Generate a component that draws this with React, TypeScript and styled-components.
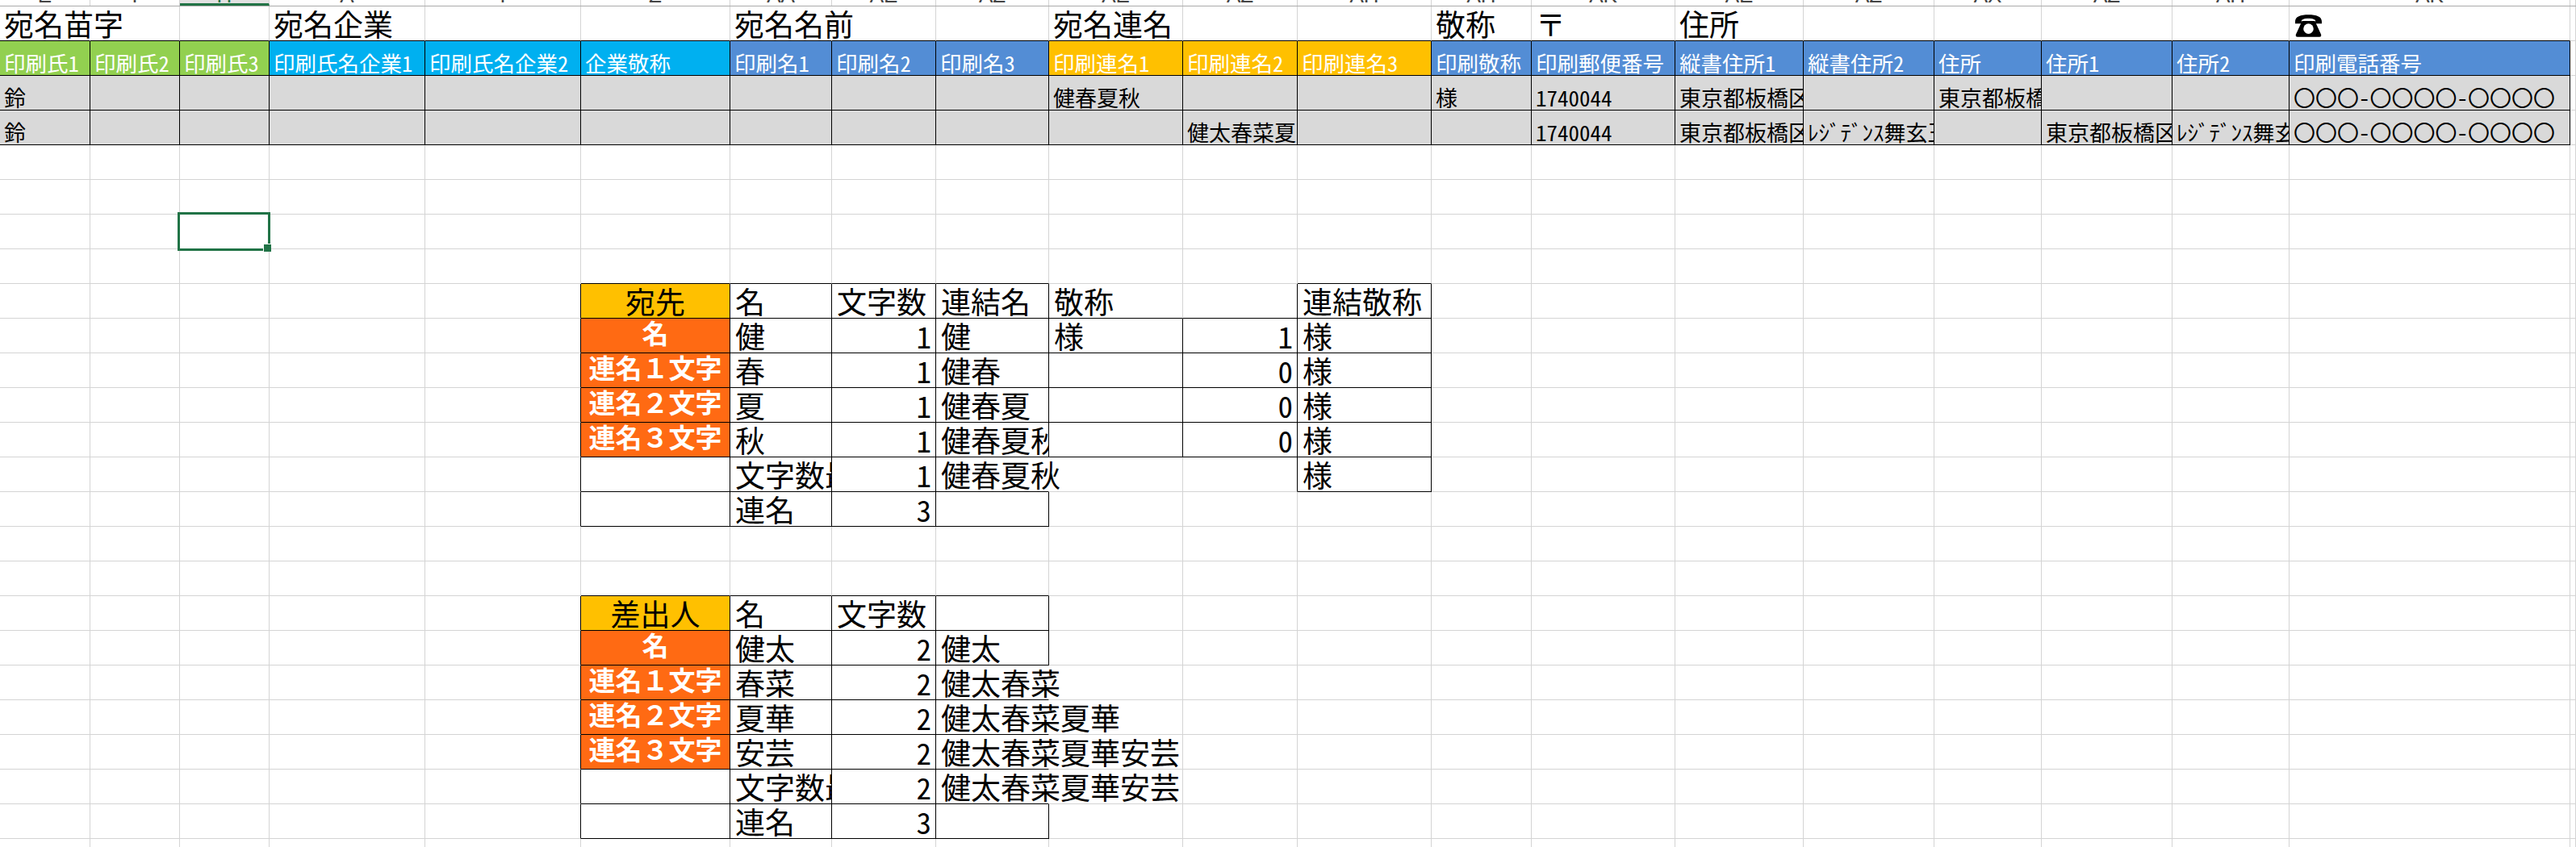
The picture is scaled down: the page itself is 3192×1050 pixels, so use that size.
import React from "react";
import styled, { createGlobalStyle, css } from "styled-components";

const COLS = [112, 111, 111, 193, 193, 185, 126, 129, 140, 166, 142, 166, 124, 178, 159, 162, 133, 162, 145, 348, 7];
const ROWS = 25;
const LETTERS = ["E", "T", "H", "A", "T", "Z", "AA", "AE", "AZ", "AE", "AZ", "AH", "AH", "AK", "AE", "AZ", "AX", "AZ", "AH", "AK", ""];
const template = COLS.map((w) => `${w}px`).join(" ");

const Global = createGlobalStyle`
  html, body { margin: 0; padding: 0; background: #fff; overflow: hidden; }
  body { font-family: "Noto Sans CJK JP", "Liberation Sans", sans-serif; font-feature-settings: "hwid"; }
`;

const Sheet = styled.div`
  width: 3192px;
  height: 1050px;
  overflow: hidden;
  background: #fff;
`;

const ColumnBar = styled.div`
  display: grid;
  grid-template-columns: ${template};
  height: 8px;
  border-bottom: 1px solid #ababab;
  box-sizing: border-box;
`;

const ColumnHead = styled.div<{ $active?: boolean }>`
  box-sizing: border-box;
  height: 7px;
  overflow: hidden;
  display: flex;
  align-items: flex-end;
  justify-content: center;
  border-right: 1px solid #d4d4d4;
  font: 26px/26px "Liberation Sans", sans-serif;
  color: #444;
  ${(p) =>
    p.$active &&
    css`
      background: #e1e1e1;
      border-bottom: 3px solid #217346;
      align-items: flex-end;
      line-height: 20px;
      color: #217346;
    `}
`;

const Grid = styled.div`
  display: grid;
  grid-template-columns: ${template};
  grid-auto-rows: 43px;
`;

type Kind = "plain" | "title" | "head" | "data" | "table" | "num" | "tag" | "label";

const kinds: Record<Kind, ReturnType<typeof css>> = {
  plain: css``,
  title: css`
    font-size: 37px;
    padding: 0 0 2px 5px;
  `,
  head: css`
    font-size: 26.5px;
    color: #fff;
    padding: 0 0 2px 5px;
  `,
  data: css`
    font-size: 27px;
    padding: 0 0 2px 5px;
  `,
  table: css`
    font-size: 37px;
    padding: 0 0 2px 6px;
  `,
  num: css`
    font-size: 37px;
    padding: 0 5px 2px 0;
    justify-content: flex-end;
  `,
  tag: css`
    font-size: 37px;
    padding: 0 0 2px 0;
    justify-content: center;
  `,
  label: css`
    font-size: 33px;
    font-weight: 700;
    color: #fff;
    padding: 1px 0 0 0;
    justify-content: center;
    align-items: flex-start;
    font-feature-settings: normal;
  `,
};

const Cell = styled.div<{
  $kind: Kind;
  $bg?: string;
  $right?: "black" | "none";
  $bottom?: boolean;
  $clip?: boolean;
  $selected?: boolean;
}>`
  box-sizing: border-box;
  display: flex;
  align-items: flex-end;
  white-space: nowrap;
  line-height: 1;
  color: #000;
  min-width: 0;
  border-right: 1px solid
    ${(p) => (p.$right === "black" ? "#000" : p.$right === "none" ? "transparent" : "#d4d4d4")};
  border-bottom: 1px solid ${(p) => (p.$bottom ? "#000" : "#d4d4d4")};
  background: ${(p) => p.$bg || "transparent"};
  overflow: ${(p) => (p.$clip ? "hidden" : "visible")};
  position: ${(p) => (p.$selected ? "relative" : "static")};
  ${(p) => kinds[p.$kind]}
`;

const PhoneSvg = styled.svg`
  width: 33px;
  height: 28px;
  margin: 0 0 2px 2px;
  display: block;
`;

const PhoneIcon = () => (
  <PhoneSvg viewBox="0 0 100 84" aria-label="☎">
    <path d="M0 26C0 7 20 0 50 0s50 7 50 26v8H76V21C69 15 31 15 24 21v13H0z" fill="#000" />
    <path d="M26 24h48l23 50q3 10-6 10H9q-9 0-6-10z" fill="#000" />
    <path d="M30 19c10-5 30-5 40 0" fill="none" stroke="#fff" strokeWidth="3" />
    <circle cx="50" cy="53" r="19" fill="#fff" />
  </PhoneSvg>
);

const SelectionFrame = styled.div`
  position: absolute;
  left: -3px;
  top: -3px;
  width: 115px;
  height: 48px;
  box-sizing: border-box;
  border: 3px solid #217346;
`;

const FillHandle = styled.div`
  position: absolute;
  right: -4px;
  bottom: -4px;
  width: 10px;
  height: 10px;
  background: #217346;
  border-left: 1px solid #fff;
  border-top: 1px solid #fff;
  box-sizing: border-box;
`;

type Spec = {
  kind?: Kind;
  text?: string;
  bg?: string;
  right?: "black" | "none";
  bottom?: boolean;
  clip?: boolean;
};

const GREEN = "#92d050";
const CYAN = "#00b0f0";
const BLUE = "#538dd5";
const AMBER = "#ffc000";
const ORANGE = "#ff6a13";
const GREY = "#d9d9d9";

const cells = new Map<string, Spec>();
const put = (r: number, c: number, s: Spec) => {
  const k = `${r},${c}`;
  cells.set(k, { ...(cells.get(k) || {}), ...s });
};

// Title row
[
  [0, "宛名苗字"],
  [3, "宛名企業"],
  [6, "宛名名前"],
  [9, "宛名連名"],
  [12, "敬称"],
  [13, "〒"],
  [14, "住所"],
].forEach(([c, t]) => put(0, c as number, { kind: "title", text: t as string }));
put(0, 0, { right: "none" });
put(0, 6, { right: "none" });
put(0, 19, { kind: "title" });

// Header row and two gray data rows
const heads = [
  ["印刷氏1", GREEN], ["印刷氏2", GREEN], ["印刷氏3", GREEN],
  ["印刷氏名企業1", CYAN], ["印刷氏名企業2", CYAN], ["企業敬称", CYAN],
  ["印刷名1", BLUE], ["印刷名2", BLUE], ["印刷名3", BLUE],
  ["印刷連名1", AMBER], ["印刷連名2", AMBER], ["印刷連名3", AMBER],
  ["印刷敬称", BLUE], ["印刷郵便番号", BLUE], ["縦書住所1", BLUE], ["縦書住所2", BLUE],
  ["住所", BLUE], ["住所1", BLUE], ["住所2", BLUE], ["印刷電話番号", BLUE],
];
heads.forEach(([t, bg], c) => {
  put(0, c, { bottom: true });
  put(1, c, { kind: "head", text: t, bg, right: "black", bottom: true });
  put(2, c, { kind: "data", bg: GREY, right: "black", bottom: true, clip: true });
  put(3, c, { kind: "data", bg: GREY, right: "black", bottom: true, clip: true });
});
const PHONE = "〇〇〇-〇〇〇〇-〇〇〇〇";
const ADDR = "東京都板橋区";
const BLDG = "ﾚｼﾞﾃﾞﾝｽ舞玄玉";
[
  [2, 0, "鈴"], [2, 9, "健春夏秋"], [2, 12, "様"], [2, 13, "1740044"], [2, 14, ADDR], [2, 16, ADDR], [2, 19, PHONE],
  [3, 0, "鈴"], [3, 10, "健太春菜夏華"], [3, 13, "1740044"], [3, 14, ADDR], [3, 15, BLDG], [3, 17, ADDR], [3, 18, BLDG], [3, 19, PHONE],
].forEach(([r, c, t]) => put(r as number, c as number, { text: t as string }));

// Lower tables
const box = { right: "black" as const, bottom: true };
const lblRows = ["名", "連名１文字", "連名２文字", "連名３文字"];

// Top edges of the tables
[5, 6, 7, 8, 11].forEach((c) => put(7, c, { bottom: true }));
[5, 6, 7, 8].forEach((c) => put(16, c, { bottom: true }));

// Left edges
for (let r = 8; r <= 14; r++) put(r, 4, { right: "black" });
for (let r = 17; r <= 23; r++) put(r, 4, { right: "black" });

// Table 1
put(8, 5, { kind: "tag", text: "宛先", bg: AMBER, ...box });
put(8, 6, { kind: "table", text: "名", ...box });
put(8, 7, { kind: "table", text: "文字数", ...box });
put(8, 8, { kind: "table", text: "連結名", ...box });
put(8, 9, { kind: "table", text: "敬称", bottom: true });
put(8, 10, { kind: "plain", ...box });
put(8, 11, { kind: "table", text: "連結敬称", ...box });
const t1 = [
  ["健", "1", "健", "様", "1"],
  ["春", "1", "健春", "", "0"],
  ["夏", "1", "健春夏", "", "0"],
  ["秋", "1", "健春夏秋", "", "0"],
];
t1.forEach((row, i) => {
  const r = 9 + i;
  put(r, 5, { kind: "label", text: lblRows[i], bg: ORANGE, ...box });
  put(r, 6, { kind: "table", text: row[0], ...box });
  put(r, 7, { kind: "num", text: row[1], ...box });
  put(r, 8, { kind: "table", text: row[2], clip: true, ...box });
  put(r, 9, { kind: "table", text: row[3], ...box });
  put(r, 10, { kind: "num", text: row[4], ...box });
  put(r, 11, { kind: "table", text: "様", ...box });
});
put(13, 5, { kind: "plain", ...box });
put(13, 6, { kind: "table", text: "文字数最", clip: true, ...box });
put(13, 7, { kind: "num", text: "1", ...box });
put(13, 8, { kind: "table", text: "健春夏秋", right: "none", bottom: true });
put(13, 10, { right: "black" });
put(13, 11, { kind: "table", text: "様", ...box });
put(14, 5, { kind: "plain", ...box });
put(14, 6, { kind: "table", text: "連名", ...box });
put(14, 7, { kind: "num", text: "3", ...box });
put(14, 8, { kind: "plain", ...box });

// Table 2
put(17, 5, { kind: "tag", text: "差出人", bg: AMBER, ...box });
put(17, 6, { kind: "table", text: "名", ...box });
put(17, 7, { kind: "table", text: "文字数", ...box });
put(17, 8, { kind: "plain", ...box });
const t2 = [
  ["健太", "健太"],
  ["春菜", "健太春菜"],
  ["夏華", "健太春菜夏華"],
  ["安芸", "健太春菜夏華安芸"],
];
t2.forEach((row, i) => {
  const r = 18 + i;
  put(r, 5, { kind: "label", text: lblRows[i], bg: ORANGE, ...box });
  put(r, 6, { kind: "table", text: row[0], ...box });
  put(r, 7, { kind: "num", text: "2", ...box });
  put(r, 8, { kind: "table", text: row[1], bottom: true, right: i === 0 ? "black" : "none" });
});
put(22, 5, { kind: "plain", ...box });
put(22, 6, { kind: "table", text: "文字数最", clip: true, ...box });
put(22, 7, { kind: "num", text: "2", ...box });
put(22, 8, { kind: "table", text: "健太春菜夏華安芸", bottom: true, right: "none" });
put(23, 5, { kind: "plain", ...box });
put(23, 6, { kind: "table", text: "連名", ...box });
put(23, 7, { kind: "num", text: "3", ...box });
put(23, 8, { kind: "plain", ...box });

export default function App() {
  const body: React.ReactNode[] = [];
  for (let r = 0; r < ROWS; r++) {
    COLS.forEach((_, c) => {
      const s = cells.get(`${r},${c}`) || {};
      const selected = r === 6 && c === 2;
      body.push(
        <Cell
          key={`${r}-${c}`}
          $kind={s.kind || "plain"}
          $bg={s.bg}
          $right={s.right}
          $bottom={s.bottom}
          $clip={s.clip}
          $selected={selected}
        >
          {r === 0 && c === 19 ? <PhoneIcon /> : s.text}
          {selected && (
            <SelectionFrame>
              <FillHandle />
            </SelectionFrame>
          )}
        </Cell>
      );
    });
  }
  return (
    <Sheet>
      <Global />
      <ColumnBar>
        {LETTERS.map((l, i) => (
          <ColumnHead key={i} $active={i === 2}>
            {l}
          </ColumnHead>
        ))}
      </ColumnBar>
      <Grid>{body}</Grid>
    </Sheet>
  );
}
